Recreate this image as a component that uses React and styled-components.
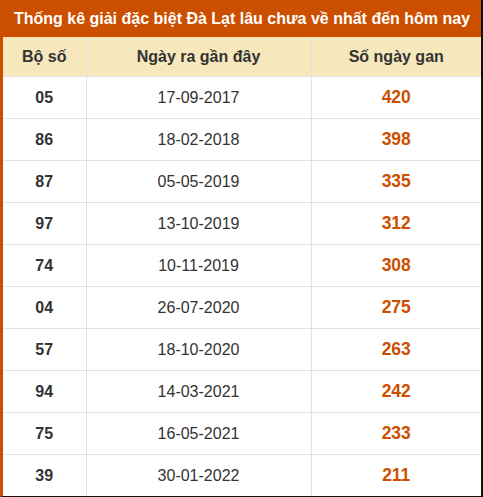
import React from 'react';
import styled, { createGlobalStyle } from 'styled-components';

const GlobalStyle = createGlobalStyle`
  html, body { margin: 0; padding: 0; background: #fff; }
  body { font-family: "Liberation Sans", Arial, sans-serif; }
`;

const Frame = styled.div`
  width: 483px;
  height: 497px;
  box-sizing: border-box;
  border-left: 3px solid #cc4f00;
  border-right: 2px solid #111;
  border-bottom: 1px solid #111;
  overflow: hidden;
`;

const Title = styled.div`
  height: 37px;
  background: #cc4f00;
  color: #fff;
  font-weight: bold;
  font-size: 16px;
  white-space: nowrap;
  display: flex;
  align-items: center;
  justify-content: center;
`;

const Table = styled.table`
  width: 100%;
  border-collapse: collapse;
  table-layout: fixed;
`;

const HeadCell = styled.th`
  height: 39px;
  padding: 0;
  background: #f6e7bd;
  color: #333;
  font-weight: bold;
  font-size: 16px;
  text-align: center;
  border-left: 1px solid #e2e2e2;
  border-bottom: 1px solid #e2e2e2;
  &:first-child { border-left: none; }
`;

const Cell = styled.td`
  height: 41px;
  padding: 0;
  text-align: center;
  font-size: ${p => (p.$gan ? '17.5px' : '16px')};
  font-weight: ${p => (p.$bold ? 'bold' : 'normal')};
  color: ${p => (p.$gan ? '#cc4f00' : '#333')};
  border-left: 1px solid #e2e2e2;
  border-bottom: 1px solid #e2e2e2;
  &:first-child { border-left: none; }
`;

const rows = [
  ['05', '17-09-2017', 420],
  ['86', '18-02-2018', 398],
  ['87', '05-05-2019', 335],
  ['97', '13-10-2019', 312],
  ['74', '10-11-2019', 308],
  ['04', '26-07-2020', 275],
  ['57', '18-10-2020', 263],
  ['94', '14-03-2021', 242],
  ['75', '16-05-2021', 233],
  ['39', '30-01-2022', 211],
];

export default function App() {
  return (
    <>
      <GlobalStyle />
      <Frame>
        <Title>Thống kê giải đặc biệt Đà Lạt lâu chưa về nhất đến hôm nay</Title>
        <Table>
          <colgroup>
            <col style={{ width: 83 }} />
            <col style={{ width: 225 }} />
            <col />
          </colgroup>
          <thead>
            <tr>
              <HeadCell>Bộ số</HeadCell>
              <HeadCell>Ngày ra gần đây</HeadCell>
              <HeadCell>Số ngày gan</HeadCell>
            </tr>
          </thead>
          <tbody>
            {rows.map(([num, date, gan]) => (
              <tr key={num}>
                <Cell $bold>{num}</Cell>
                <Cell>{date}</Cell>
                <Cell $bold $gan>{gan}</Cell>
              </tr>
            ))}
          </tbody>
        </Table>
      </Frame>
    </>
  );
}
